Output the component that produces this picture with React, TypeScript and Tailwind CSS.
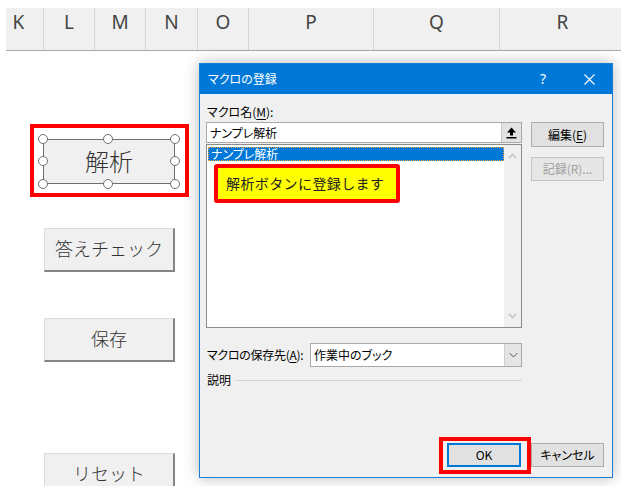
import React from "react";

function Handle({ cls }: { cls: string }) {
  return (
    <span
      className={
        "absolute w-[10px] h-[10px] rounded-full border-[1.5px] border-[#6f6f6f] bg-white " +
        cls
      }
    />
  );
}

function SheetButton({ label, mt }: { label: string; mt: string }) {
  return (
    <div
      className={
        "ml-[44px] w-[131px] h-[44px] shrink-0 bg-[#f0f0f0] border-t border-l border-t-[#dcdcdc] border-l-[#dcdcdc] border-r-2 border-b-2 border-r-[#858585] border-b-[#858585] flex items-center justify-center pb-[3px] text-[18px] font-light text-[#333] leading-none " +
        mt
      }
    >
      {label}
    </div>
  );
}

export default function App() {
  return (
    <div className="relative w-[621px] h-[486px] overflow-hidden bg-white">
      {/* column header */}
      <div className="mt-[8px] ml-[6px] flex h-[43px] bg-[#f0f0f0] border-b border-[#a8a8a8] font-['Noto_Sans',sans-serif] text-[19px] leading-[24px] text-[#444]">
        <div className="w-[38px] shrink-0 border-r border-[#d6d6d6] flex justify-center pr-[12px] pt-[2px]">K</div>
        <div className="w-[51px] shrink-0 border-r border-[#d6d6d6] flex justify-center pt-[2px]">L</div>
        <div className="w-[51px] shrink-0 border-r border-[#d6d6d6] flex justify-center pt-[2px]">M</div>
        <div className="w-[52px] shrink-0 border-r border-[#d6d6d6] flex justify-center pt-[2px]">N</div>
        <div className="w-[51px] shrink-0 border-r border-[#d6d6d6] flex justify-center pt-[2px]">O</div>
        <div className="w-[125px] shrink-0 border-r border-[#d6d6d6] flex justify-center pt-[2px]">P</div>
        <div className="w-[126px] shrink-0 border-r border-[#d6d6d6] flex justify-center pt-[2px]">Q</div>
        <div className="w-[126px] shrink-0 border-r border-[#d6d6d6] flex justify-center pt-[2px]">R</div>
      </div>

      {/* sheet buttons */}
      <div className="flex flex-col items-start font-['Noto_Sans_CJK_JP',sans-serif]">
        <div className="ml-[30px] mt-[73px] w-[159px] h-[73px] border-[4px] border-[#ff0000] pl-[9px] pt-[11px]">
          <div className="relative w-[132px] h-[45px] bg-[#f0f0f0] border border-[#6f6f6f] flex items-center justify-center pb-[2px] text-[24px] font-light text-[#333] leading-none">
            解析
            <Handle cls="left-[-6px] top-[-6px]" />
            <Handle cls="left-[59px] top-[-6px]" />
            <Handle cls="right-[-6px] top-[-6px]" />
            <Handle cls="left-[-6px] top-[16px]" />
            <Handle cls="right-[-6px] top-[16px]" />
            <Handle cls="left-[-6px] bottom-[-6px]" />
            <Handle cls="left-[59px] bottom-[-6px]" />
            <Handle cls="right-[-6px] bottom-[-6px]" />
          </div>
        </div>
        <SheetButton label="答えチェック" mt="mt-[31px]" />
        <SheetButton label="保存" mt="mt-[46px]" />
        <SheetButton label="リセット" mt="mt-[91px]" />
      </div>

      {/* dialog */}
      <div className="absolute left-[199px] top-[63px] w-[414px] h-[415px] border border-[#1a7fd4] bg-[#f0f0f0] flex flex-col shadow-[0_0_14px_rgba(0,0,0,0.28)] font-['Noto_Sans_CJK_JP',sans-serif] text-[12px] text-black [font-feature-settings:'palt']">
        <div className="h-[30px] shrink-0 bg-[#0078d7] flex items-center text-white">
          <span className="pl-[8px] leading-none">マクロの登録</span>
          <div className="ml-auto flex h-full">
            <div className="w-[46px] flex items-center justify-center text-[14px] font-['Noto_Sans',sans-serif] leading-none">?</div>
            <div className="w-[46px] flex items-center justify-center">
              <svg width="11" height="11" viewBox="0 0 11 11">
                <path d="M0.5 0.5 L10.5 10.5 M10.5 0.5 L0.5 10.5" stroke="white" strokeWidth="1.1" fill="none" />
              </svg>
            </div>
          </div>
        </div>

        <div className="flex flex-col flex-1 pl-[6px] pr-[8px] pt-[10px] pb-[10px]">
          <div className="pl-[1px] leading-[16px]">
            マクロ名(<span className="underline underline-offset-2">M</span>):
          </div>
          <div className="mt-[2px] flex gap-[9px]">
            <div className="w-[316px] flex flex-col">
              <div className="h-[21px] border border-[#a9a9a9] bg-white flex items-center">
                <span className="pl-[3px] leading-none">ナンプレ解析</span>
                <div className="ml-auto w-[20px] h-full bg-[#e3e3e3] border-l border-[#c8c8c8] flex items-center justify-center">
                  <svg width="11" height="12" viewBox="0 0 11 12">
                    <path d="M5.5 0.5 L10 5.5 H7 V8.5 H4 V5.5 H1 Z" fill="black" />
                    <rect x="0.5" y="10" width="10" height="1.5" fill="black" />
                  </svg>
                </div>
              </div>
              <div className="relative mt-[1px] h-[184px] border border-[#8c8c8c] bg-white flex">
                <div className="flex-1 pl-[1px] pt-[2px]">
                  <div className="h-[14px] bg-[#0078d7] outline outline-1 outline-dotted outline-[#e8a040] -outline-offset-1 text-white leading-[14px] pl-[3px]">
                    ナンプレ解析
                  </div>
                </div>
                <div className="w-[17px] bg-[#f0f0f0] flex flex-col items-center justify-between py-[8px]">
                  <svg width="9" height="6" viewBox="0 0 9 6">
                    <path d="M1 5 L4.5 1.5 L8 5" stroke="#c0c0c0" strokeWidth="1.5" fill="none" />
                  </svg>
                  <svg width="9" height="6" viewBox="0 0 9 6">
                    <path d="M1 1 L4.5 4.5 L8 1" stroke="#c0c0c0" strokeWidth="1.5" fill="none" />
                  </svg>
                </div>
                <div className="absolute left-[7px] top-[19px] w-[186px] h-[39px] border-[4px] border-[#ff0000] rounded-[3px] bg-[#ffff00] flex items-center pl-[8px] text-[14px] text-[#222] tracking-[0.4px] [font-feature-settings:normal]">
                  解析ボタンに登録します
                </div>
              </div>
            </div>
            <div className="w-[73px] flex flex-col">
              <div className="h-[25px] border border-[#adadad] bg-[#e1e1e1] flex items-center justify-center leading-none">
                編集(<span className="underline underline-offset-2">E</span>)
              </div>
              <div className="mt-[10px] h-[24px] border border-[#c4c4c4] bg-[#e6e6e6] flex items-center justify-center leading-none text-[#a0a0a0]">
                記録(R)...
              </div>
            </div>
          </div>

          <div className="mt-[15px] flex items-center w-[316px]">
            <div className="w-[104px] shrink-0 pl-[1px] leading-[16px] tracking-[-0.3px]">
              マクロの保存先(<span className="underline underline-offset-2">A</span>):
            </div>
            <div className="w-[212px] h-[24px] border border-[#a9a9a9] bg-white flex items-center">
              <span className="pl-[3px] leading-none">作業中のブック</span>
              <div className="ml-auto w-[17px] h-full bg-[#e5e5e5] border-l border-[#cfcfcf] flex items-center justify-center">
                <svg width="9" height="6" viewBox="0 0 9 6">
                  <path d="M0.5 1 L4.5 5 L8.5 1" stroke="#555" strokeWidth="1" fill="none" />
                </svg>
              </div>
            </div>
          </div>

          <div className="mt-[5px] flex items-center w-[316px]">
            <span className="pl-[1px] leading-[16px]">説明</span>
            <div className="ml-[4px] flex-1 h-px bg-[#d5d5d5]" />
          </div>

          <div className="mt-auto flex justify-end gap-[10px]">
            <div className="relative">
              <div className="w-[74px] h-[24px] border-2 border-[#0078d7] bg-[#e1e1e1] flex items-center justify-center leading-none">
                OK
              </div>
              <div className="absolute left-[-8px] top-[-6px] right-[-10px] bottom-[-7px] border-[4px] border-[#ff0000] z-10" />
            </div>
            <div className="w-[73px] h-[24px] border border-[#adadad] bg-[#e1e1e1] flex items-center justify-center leading-none">
              キャンセル
            </div>
          </div>
        </div>
      </div>
    </div>
  );
}
